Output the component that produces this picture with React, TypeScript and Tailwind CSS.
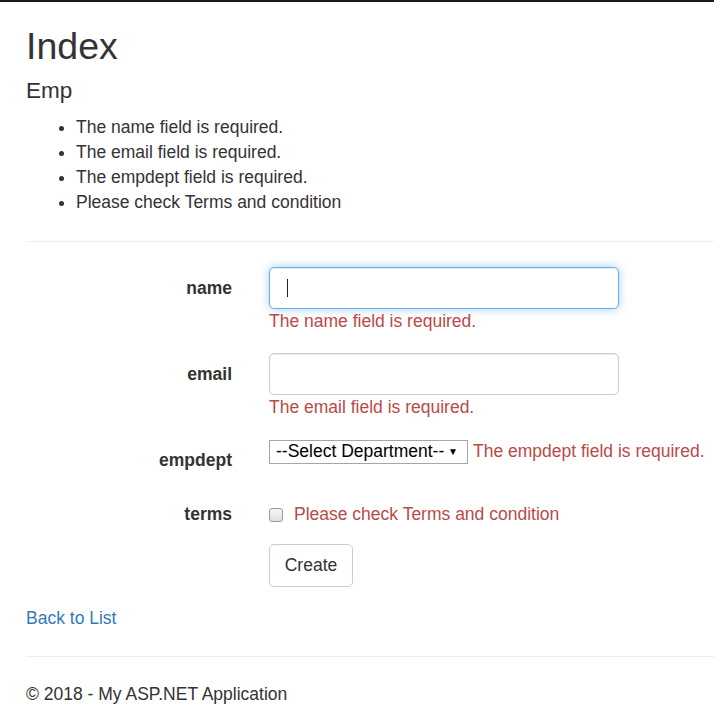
export default function App() {
  return (
    <div className="min-h-[721px] bg-white font-['Liberation_Sans',Arial,sans-serif] text-[17.5px] leading-[25px] text-[#333]">
      <div className="h-[2px] bg-[#1c1c1c]" />
      <div className="pl-[26px]">
        <h2 className="mt-[24px] text-[37.5px] leading-[1.1]">Index</h2>
        <h4 className="mt-[12px] text-[22.5px] leading-[1.1]">Emp</h4>
        <ul className="mt-[11px] list-disc pl-[50px]">
          <li>The name field is required.</li>
          <li>The email field is required.</li>
          <li>The empdept field is required.</li>
          <li>Please check Terms and condition</li>
        </ul>
        <div className="mt-[26px] h-px bg-[#eee]" />

        <form className="mt-[25px]">
          <div className="mb-[19px] flex">
            <label className="w-[206px] pt-[9px] text-right font-bold">name</label>
            <div className="ml-[37px]">
              <div className="flex h-[42px] w-[350px] items-center rounded-[5px] border border-[#66afe9] bg-white shadow-[inset_0_1px_1px_rgba(0,0,0,0.075),0_0_10px_rgba(102,175,233,0.6)]">
                <span className="ml-[17px] h-[18px] w-px bg-[#222]" />
              </div>
              <div className="text-[#b94a48]">The name field is required.</div>
            </div>
          </div>

          <div className="mb-[19px] flex">
            <label className="w-[206px] pt-[9px] text-right font-bold">email</label>
            <div className="ml-[37px]">
              <div className="h-[42px] w-[350px] rounded-[5px] border border-[#ccc] bg-white shadow-[inset_0_1px_1px_rgba(0,0,0,0.075)]" />
              <div className="text-[#b94a48]">The email field is required.</div>
            </div>
          </div>

          <div className="mb-[20px] flex">
            <label className="w-[206px] pt-[9px] text-right font-bold">empdept</label>
            <div className="ml-[37px] flex h-[25px] items-center">
              <div className="flex h-[24px] w-[199px] items-center border border-[#a6a6a6] bg-white pl-[6px] text-black">
                <span>--Select Department--</span>
                <span className="ml-auto mr-[9px] text-[10px] leading-none">▼</span>
              </div>
              <span className="ml-[5px] whitespace-nowrap text-[#b94a48]">The empdept field is required.</span>
            </div>
          </div>

          <div className="mb-[17px] flex">
            <label className="w-[206px] pt-[9px] text-right font-bold">terms</label>
            <div className="ml-[37px] mt-[9px] flex h-[25px] items-center">
              <span className="h-[14px] w-[14px] rounded-[3px] border border-[#9a9a9a] bg-gradient-to-b from-[#f6f6f6] to-[#e0e0e0]" />
              <span className="ml-[11px] text-[#b94a48]">Please check Terms and condition</span>
            </div>
          </div>

          <div className="mb-[19px] ml-[243px]">
            <button
              type="button"
              className="h-[43px] w-[84px] rounded-[5px] border border-[#ccc] bg-white text-[#333]"
            >
              Create
            </button>
          </div>
        </form>

        <div>
          <a className="text-[#337ab7]" href="#">Back to List</a>
        </div>

        <div className="mt-[25px] h-px bg-[#eee]" />
        <footer className="mt-[25px]">
          <p>© 2018 - My ASP.NET Application</p>
        </footer>
      </div>
    </div>
  );
}
